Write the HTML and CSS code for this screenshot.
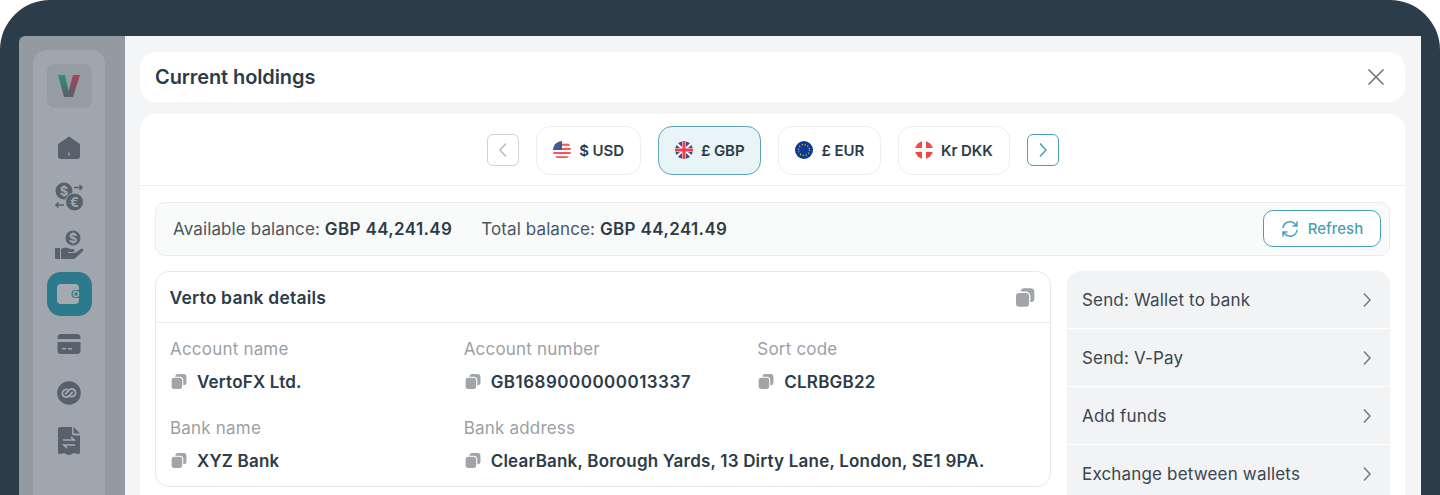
FILE: index.html
```html
<!DOCTYPE html>
<html lang="en">
<head>
    <meta charset="UTF-8">
    <meta name="viewport" content="width=device-width, initial-scale=1.0">
    <title>Current holdings</title>
    <link rel="stylesheet" href="styles.css">
</head>
<body>
    <div class="device">
        <div class="screen">
            <!-- Sidebar -->
            <aside class="sidebar">
                <nav class="rail">
                    <div class="logo">
                        <svg width="24" height="24" viewBox="0 0 24 24">
                            <defs>
                                <linearGradient id="logo-left" x1="0" y1="0" x2="0" y2="1"><stop offset="0" stop-color="#2f8f7a"/><stop offset="1" stop-color="#55606b"/></linearGradient>
                                <linearGradient id="logo-right" x1="0" y1="0" x2="0" y2="1"><stop offset="0" stop-color="#a8415a"/><stop offset="1" stop-color="#55606b"/></linearGradient>
                            </defs>
                            <path d="M1 1h7l5 22H7z" fill="url(#logo-left)"/>
                            <path d="M16 1h7l-7 22H10z" fill="url(#logo-right)"/>
                        </svg>
                    </div>
                    <a class="nav-item nav-home">
                        <svg width="24" height="24" viewBox="0 0 24 24"><path d="M12 .5 22.2 7.4c.6.4.8 1 .8 1.700V20a3 3 0 0 1-3 3H4a3 3 0 0 1-3-3V9.100c0-.7.3-1.300.8-1.700zM11.300 16.500v3h1.400v-3z" fill="#56616c" fill-rule="evenodd"/></svg>
                    </a>
                    <a class="nav-item">
                        <svg width="30" height="30" viewBox="0 0 30 30">
                            <circle cx="10" cy="9" r="8.500" fill="#56616c"/>
                            <circle cx="20.500" cy="20" r="9" fill="#56616c" stroke="#a0a6ae" stroke-width="1"/>
                            <text x="10" y="13.500" class="nav-glyph">$</text>
                            <text x="20.500" y="24.500" class="nav-glyph">€</text>
                            <path d="M20 5.500h8M25.500 3 28 5.500 25.500 8M10 23H2M4.500 20.500 2 23l2.500 2.500" fill="none" stroke="#56616c" stroke-width="1.500"/>
                        </svg>
                    </a>
                    <a class="nav-item">
                        <svg width="30" height="30" viewBox="0 0 30 30">
                            <circle cx="19" cy="8" r="7.500" fill="#56616c"/>
                            <text x="19" y="12.500" class="nav-glyph">$</text>
                            <path d="M1 18h5v11H1zM7 19c3-2 6-2 9 0h3c2 0 2 3 0 3h-5v1h7l6-4c2-1 3 1 2 2l-7 6.500c-1 1-2 1.500-3 1.500H7z" fill="#56616c"/>
                        </svg>
                    </a>
                    <a class="nav-item nav-active">
                        <svg width="26" height="22" viewBox="0 0 26 22"><path d="M5 1h14a4 4 0 0 1 4 4v2h-3.500a4 4 0 0 0 0 8H23v2a4 4 0 0 1-4 4H5a4 4 0 0 1-4-4V5a4 4 0 0 1 4-4z" fill="#a3aab2"/><circle cx="20" cy="11" r="2.500" fill="none" stroke="#a3aab2" stroke-width="1.600"/></svg>
                    </a>
                    <a class="nav-item">
                        <svg width="24" height="20" viewBox="0 0 24 20"><path d="M4 0h16a3.500 3.500 0 0 1 3.500 3.500V5H.5V3.500A3.500 3.500 0 0 1 4 0zM.5 8h23v8.500A3.500 3.500 0 0 1 20 20H4a3.500 3.500 0 0 1-3.500-3.500zM5 14v1.500h4V14zm6 0v1.500h4V14z" fill="#56616c" fill-rule="evenodd"/></svg>
                    </a>
                    <a class="nav-item">
                        <svg width="24" height="24" viewBox="0 0 24 24"><circle cx="12" cy="12" r="11.800" fill="#56616c"/><path d="M10.500 8.500a4 4 0 0 0-4 1.200 3.800 3.800 0 0 0 0 5.300 3.800 3.800 0 0 0 5.300 0l3.500-3.700M13.500 15.500a4 4 0 0 0 4-1.200 3.800 3.800 0 0 0 0-5.300 3.800 3.800 0 0 0-5.300 0L8.700 12.700" fill="none" stroke="#a3aab2" stroke-width="1.800" stroke-linecap="round"/></svg>
                    </a>
                    <a class="nav-item">
                        <svg width="24" height="28" viewBox="0 0 24 28"><path d="M3 0h12v6a2.500 2.500 0 0 0 2.500 2.500H23V25c0 1.500-1 2.500-2.500 2-1.500-.6-3-1-4.500-.5-1.500.6-2 1.500-4 1.500s-2.500-1-4-1.500c-1.500-.5-3 0-4.500.5C2 27.500 1 26.500 1 25V2c0-1 1-2 2-2z" fill="#56616c"/><path d="M16.500 0 23 6.500h-5a1.500 1.500 0 0 1-1.500-1.500z" fill="#56616c"/><path d="M6 13h11l-3-3M18 18H7l3 3" fill="none" stroke="#a3aab2" stroke-width="1.700"/></svg>
                    </a>
                </nav>
            </aside>

            <!-- Main -->
            <main class="main">
                <header class="page-head">
                    <h1>Current holdings</h1>
                    <svg width="18" height="18" viewBox="0 0 18 18"><path d="M1.500 1.500l15 15M16.500 1.500l-15 15" stroke="#6b7178" stroke-width="1.500" fill="none"/></svg>
                </header>

                <section class="panel">
                    <div class="tabs">
                        <button class="arrow arrow-off"><svg width="10" height="16" viewBox="0 0 10 16"><path d="M8 1.500 2 8l6 6.500" fill="none" stroke="#b4b8bd" stroke-width="1.400"/></svg></button>
                        <button class="tab">
                            <svg class="flag" width="18" height="18" viewBox="0 0 18 18">
                                <circle cx="9" cy="9" r="9" fill="#f9f9f9"/>
                                <path d="M2 2.800h14l1 2H1zM.3 7h17.400v2H.3zM.3 11h17.400v2H.3zM2 15.200h14L14 17H4z" fill="#ee5a5a"/>
                                <path d="M9 0v9H.1A9 9 0 0 1 9 0z" fill="#3c5a9e"/>
                            </svg>
                            $ USD
                        </button>
                        <button class="tab tab-active">
                            <svg class="flag" width="18" height="18" viewBox="0 0 18 18">
                                <circle cx="9" cy="9" r="9" fill="#f7f7f7"/>
                                <path d="M3 2.200 7 6V.4A9 9 0 0 0 3 2.200zM11 .4V6l4-3.800A9 9 0 0 0 11 .4zM.4 7H5L1.600 4A9 9 0 0 0 .4 7zM13 7h4.600a9 9 0 0 0-1.200-3zM.4 11a9 9 0 0 0 1.200 3L5 11zM13 11l3.400 3a9 9 0 0 0 1.200-3zM3 15.800A9 9 0 0 0 7 17.600V12zM11 12v5.600a9 9 0 0 0 4-1.800z" fill="#3c4f8f"/>
                                <path d="M7.500 0h3v7.500H18v3h-7.500V18h-3v-7.500H0v-3h7.500z" fill="#ee3f4a"/>
                            </svg>
                            £ GBP
                        </button>
                        <button class="tab">
                            <svg class="flag" width="18" height="18" viewBox="0 0 18 18">
                                <circle cx="9" cy="9" r="9" fill="#0f3a94"/>
                                <circle cx="9" cy="9" r="5.500" fill="none" stroke="#e8d44d" stroke-width="1.200" stroke-dasharray="1 1.880"/>
                            </svg>
                            £ EUR
                        </button>
                        <button class="tab">
                            <svg class="flag" width="18" height="18" viewBox="0 0 18 18">
                                <circle cx="9" cy="9" r="9" fill="#f04848"/>
                                <path d="M7 0h4v7h7v4h-7v7H7v-7H0V7h7z" fill="#fafafa"/>
                            </svg>
                            Kr DKK
                        </button>
                        <button class="arrow arrow-on"><svg width="10" height="16" viewBox="0 0 10 16"><path d="M2 1.500 8 8l-6 6.500" fill="none" stroke="#4a9fb5" stroke-width="1.500"/></svg></button>
                    </div>

                    <div class="content">
                        <div class="balance">
                            <span class="bal-item">Available balance: <b>GBP 44,241.49</b></span>
                            <span class="bal-item">Total balance: <b>GBP 44,241.49</b></span>
                            <button class="refresh">
                                <svg width="18" height="18" viewBox="0 0 18 18"><path d="M2 8a7 7 0 0 1 12.500-3.500L16 6M16 10a7 7 0 0 1-12.500 3.500L2 12M16 1.500V6h-4.500M2 16.500V12h4.500" fill="none" stroke="#4a9fb5" stroke-width="1.500"/></svg>
                                Refresh
                            </button>
                        </div>

                        <div class="columns">
                            <div class="bank-card">
                                <div class="bank-head">
                                    <h2>Verto bank details</h2>
                                    <svg width="21" height="21" viewBox="0 0 16 16"><use href="#copy-icon"/></svg>
                                </div>
                                <div class="bank-grid">
                                    <div class="field">
                                        <span class="field-label">Account name</span>
                                        <span class="field-value"><svg width="17" height="17" viewBox="0 0 16 16"><use href="#copy-icon"/></svg>VertoFX Ltd.</span>
                                    </div>
                                    <div class="field">
                                        <span class="field-label">Account number</span>
                                        <span class="field-value field-num"><svg width="17" height="17" viewBox="0 0 16 16"><use href="#copy-icon"/></svg>GB1689000000013337</span>
                                    </div>
                                    <div class="field">
                                        <span class="field-label">Sort code</span>
                                        <span class="field-value"><svg width="17" height="17" viewBox="0 0 16 16"><use href="#copy-icon"/></svg>CLRBGB22</span>
                                    </div>
                                    <div class="field">
                                        <span class="field-label">Bank name</span>
                                        <span class="field-value"><svg width="17" height="17" viewBox="0 0 16 16"><use href="#copy-icon"/></svg>XYZ Bank</span>
                                    </div>
                                    <div class="field field-wide">
                                        <span class="field-label">Bank address</span>
                                        <span class="field-value"><svg width="17" height="17" viewBox="0 0 16 16"><use href="#copy-icon"/></svg>ClearBank, Borough Yards, 13 Dirty Lane, London, SE1 9PA.</span>
                                    </div>
                                </div>
                            </div>

                            <ul class="actions">
                                <li>Send: Wallet to bank<svg width="10" height="16" viewBox="0 0 10 16"><path d="M2 1.500 8 8l-6 6.500" fill="none" stroke="#6f757c" stroke-width="1.400"/></svg></li>
                                <li>Send: V-Pay<svg width="10" height="16" viewBox="0 0 10 16"><path d="M2 1.500 8 8l-6 6.500" fill="none" stroke="#6f757c" stroke-width="1.400"/></svg></li>
                                <li>Add funds<svg width="10" height="16" viewBox="0 0 10 16"><path d="M2 1.500 8 8l-6 6.500" fill="none" stroke="#6f757c" stroke-width="1.400"/></svg></li>
                                <li>Exchange between wallets<svg width="10" height="16" viewBox="0 0 10 16"><path d="M2 1.500 8 8l-6 6.500" fill="none" stroke="#6f757c" stroke-width="1.400"/></svg></li>
                            </ul>
                        </div>
                    </div>
                </section>
            </main>
        </div>
    </div>

    <!-- Shared copy icon -->
    <svg class="sprite" width="0" height="0">
        <symbol id="copy-icon" viewBox="0 0 16 16">
            <rect x="5" y="1" width="10.500" height="10.500" rx="2.800" fill="#a1a5aa"/>
            <rect x="1" y="4" width="11" height="11.500" rx="3" fill="#a1a5aa" stroke="#fff" stroke-width="1"/>
        </symbol>
    </svg>
</body>
</html>
```

FILE: styles.css
```css
/* General Styles */
html, body {
    margin: 0;
    height: 495px;
    overflow: hidden;
    background: #fff;
}

body {
    font-family: Inter, "Liberation Sans", sans-serif;
    color: #2c3c49;
}

h1, h2, ul {
    margin: 0;
    padding: 0;
}

button {
    font-family: inherit;
    cursor: pointer;
}

.sprite {
    position: absolute;
}

/* Device frame */
.device {
    height: 495px;
    box-sizing: border-box;
    padding: 36px 19px 0;
    background: #2c3c49;
    border-radius: 50px 50px 0 0;
}

.screen {
    display: flex;
    height: 459px;
    overflow: hidden;
    border-radius: 6px 0 0 0;
}

/* Sidebar */
.sidebar {
    width: 106px;
    flex-shrink: 0;
    box-sizing: border-box;
    padding: 14px 20px 0 14px;
    background: #939aa2;
}

.rail {
    display: flex;
    flex-direction: column;
    align-items: center;
    height: 600px;
    padding-top: 14px;
    background: #a0a6ae;
    border-radius: 14px;
}

.logo {
    display: flex;
    justify-content: center;
    align-items: center;
    width: 45px;
    height: 44px;
    margin-bottom: 16px;
    background: #959ca4;
    border-radius: 8px;
}

.nav-item {
    display: flex;
    justify-content: center;
    align-items: center;
    flex-shrink: 0;
    width: 45px;
    height: 48.5px;
}

.nav-active {
    height: 44px;
    margin: 2.5px 0 4px;
    background: #2d7a8c;
    border-radius: 14px;
}

.nav-glyph {
    font-size: 13px;
    font-weight: 700;
    text-anchor: middle;
    fill: #a0a6ae;
}

/* Main */
.main {
    flex: 1;
    min-width: 0;
    padding: 16px 16px 0 15px;
    background: #f3f5f6;
}

.page-head {
    display: flex;
    justify-content: space-between;
    align-items: center;
    height: 50px;
    box-sizing: border-box;
    padding: 0 20px 0 15px;
    margin-bottom: 12px;
    background: #fff;
    border-radius: 16px;
}

.page-head h1 {
    font-size: 20px;
    font-weight: 600;
    letter-spacing: -0.1px;
}

.panel {
    height: 500px;
    background: #fff;
    border-radius: 16px 16px 0 0;
}

/* Currency tabs */
.tabs {
    display: flex;
    justify-content: center;
    align-items: center;
    height: 72px;
    box-sizing: border-box;
    padding: 1px 0 0 1px;
    border-bottom: 1px solid #e9ebed;
}

.tab {
    display: flex;
    align-items: center;
    justify-content: center;
    gap: 8px;
    height: 49px;
    margin-right: 17px;
    padding: 0 16px;
    background: #fff;
    border: 1px solid #eceef0;
    border-radius: 14px;
    font-size: 15px;
    font-weight: 600;
    letter-spacing: -0.1px;
    color: #2c3c49;
}

.tab-active {
    background: #e9f4f7;
    border-color: #5ca3b6;
}

.arrow {
    display: flex;
    align-items: center;
    justify-content: center;
    width: 32px;
    height: 32px;
    padding: 0;
    background: #fff;
    border-radius: 6px;
}

.arrow-off {
    margin-right: 17px;
    border: 1px solid #cfd2d5;
}

.arrow-on {
    border: 1px solid #4a9fb5;
}

.content {
    padding: 16px 15px 0;
}

/* Balance bar */
.balance {
    display: flex;
    align-items: center;
    gap: 29px;
    height: 54px;
    box-sizing: border-box;
    padding: 0 8px 0 17px;
    background: #f9fafa;
    border: 1px solid #e9ebed;
    border-radius: 10px;
    font-size: 17px;
    letter-spacing: 0.11px;
    color: #4a5662;
}

.bal-item b {
    font-weight: 600;
    letter-spacing: 0.37px;
    color: #2c3c49;
}

.refresh {
    display: flex;
    align-items: center;
    justify-content: center;
    gap: 9px;
    width: 118px;
    height: 37px;
    margin: 0 0 1px auto;
    padding: 0;
    background: #fff;
    border: 1px solid #4a9fb5;
    border-radius: 10px;
    font-size: 15px;
    font-weight: 500;
    letter-spacing: 0;
    color: #4a9fb5;
}

.columns {
    display: flex;
    gap: 16px;
    margin-top: 15px;
}

/* Bank card */
.bank-card {
    width: 896px;
    height: 216px;
    box-sizing: border-box;
    flex-shrink: 0;
    border: 1px solid #e6e8ea;
    border-radius: 14px;
}

.bank-head {
    display: flex;
    justify-content: space-between;
    align-items: center;
    height: 51px;
    box-sizing: border-box;
    padding: 0 15px 0 13.500px;
    border-bottom: 1px solid #e9ebed;
}

.bank-head h2 {
    font-size: 17.500px;
    font-weight: 600;
    letter-spacing: 0.2px;
}

.bank-grid {
    display: grid;
    grid-template-columns: repeat(3, 293.670px);
    grid-auto-rows: 79px;
    padding: 15px 14px 0;
}

.field {
    display: flex;
    flex-direction: column;
    gap: 10.500px;
}

.field-wide {
    grid-column: span 2;
}

.field-label {
    font-size: 17px;
    line-height: 22px;
    letter-spacing: 0.2px;
    color: #9b9fa5;
}

.field-value {
    display: flex;
    align-items: center;
    gap: 10px;
    font-size: 17px;
    line-height: 22px;
    font-weight: 600;
    letter-spacing: 0.2px;
    white-space: nowrap;
}

.field-num {
    letter-spacing: 0.48px;
}

/* Actions menu */
.actions {
    flex: 1;
    list-style: none;
    border-radius: 14px 14px 0 0;
    overflow: hidden;
}

.actions li {
    display: flex;
    justify-content: space-between;
    align-items: center;
    height: 57px;
    padding: 0 18px 0 15px;
    margin-bottom: 1px;
    background: #f1f3f4;
    font-size: 17px;
    letter-spacing: 0.17px;
    color: #3a4652;
}
```
